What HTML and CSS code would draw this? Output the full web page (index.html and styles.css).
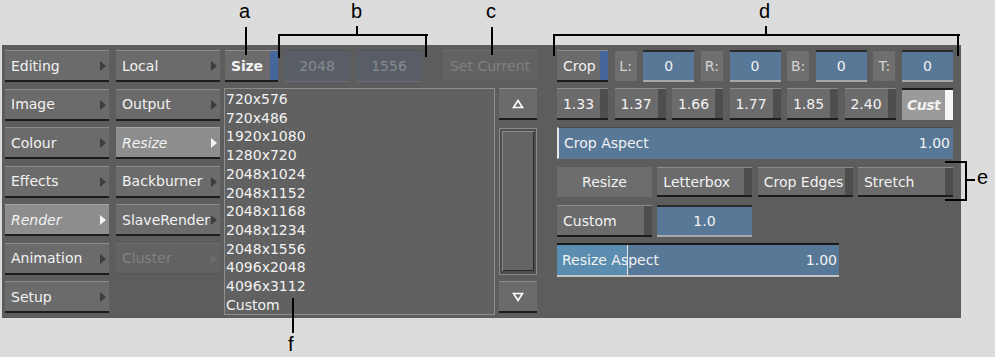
FILE: index.html
```html
<!DOCTYPE html>
<html>
<head>
  <title>Render - Resize</title>
  <link rel="stylesheet" href="styles.css">
</head>
<body>
  <div class="panel">
    <div class="col menu">
      <div class="btn">Editing<span class="arrow"></span></div>
      <div class="btn">Image<span class="arrow"></span></div>
      <div class="btn">Colour<span class="arrow"></span></div>
      <div class="btn">Effects<span class="arrow"></span></div>
      <div class="btn sel">Render<span class="arrow"></span></div>
      <div class="btn">Animation<span class="arrow"></span></div>
      <div class="btn">Setup<span class="arrow"></span></div>
    </div>

    <div class="col menu sub">
      <div class="btn">Local<span class="arrow"></span></div>
      <div class="btn">Output<span class="arrow"></span></div>
      <div class="btn sel">Resize<span class="arrow"></span></div>
      <div class="btn">Backburner<span class="arrow"></span></div>
      <div class="btn">SlaveRender<span class="arrow"></span></div>
      <div class="btn off">Cluster<span class="arrow"></span></div>
    </div>

    <div class="col sizes">
      <div class="sizerow">
        <div class="btn blue size">Size</div>
        <div class="dim">2048</div>
        <div class="dim">1556</div>
        <div class="btn off setcur">Set Current</div>
      </div>
      <div class="listrow">
        <div class="list">
          <div>720x576</div>
          <div>720x486</div>
          <div>1920x1080</div>
          <div>1280x720</div>
          <div>2048x1024</div>
          <div>2048x1152</div>
          <div>2048x1168</div>
          <div>2048x1234</div>
          <div>2048x1556</div>
          <div>4096x2048</div>
          <div>4096x3112</div>
          <div>Custom</div>
        </div>
        <div class="scroll">
          <div class="btn sbtn"><svg width="12" height="10" viewBox="0 0 12 10"><polygon points="1.5,8.5 6,1.5 10.5,8.5" fill="none" stroke="#fff" stroke-width="1.6"/></svg></div>
          <div class="track"></div>
          <div class="btn sbtn"><svg width="12" height="10" viewBox="0 0 12 10"><polygon points="1.5,1.5 10.5,1.5 6,8.5" fill="none" stroke="#fff" stroke-width="1.6"/></svg></div>
        </div>
      </div>
    </div>

    <div class="col right">
      <div class="row r1">
        <div class="btn blue crop">Crop</div>
        <div class="lbl">L:</div>
        <div class="field">0</div>
        <div class="lbl">R:</div>
        <div class="field">0</div>
        <div class="lbl">B:</div>
        <div class="field">0</div>
        <div class="lbl">T:</div>
        <div class="field">0</div>
      </div>
      <div class="row r2">
        <div class="btn strip ratio">1.33</div>
        <div class="btn strip ratio">1.37</div>
        <div class="btn strip ratio">1.66</div>
        <div class="btn strip ratio">1.77</div>
        <div class="btn strip ratio">1.85</div>
        <div class="btn strip ratio">2.40</div>
        <div class="cust">Cust</div>
      </div>
      <div class="slider crop-aspect">
        <span>Crop Aspect</span><span>1.00</span>
      </div>
      <div class="row r4">
        <div class="flat">Resize</div>
        <div class="btn strip wide">Letterbox</div>
        <div class="btn strip wide">Crop Edges</div>
        <div class="btn strip wide">Stretch</div>
      </div>
      <div class="row r5">
        <div class="btn strip wide">Custom</div>
        <div class="field wide">1.0</div>
      </div>
      <div class="slider resize-aspect">
        <div class="fill"></div>
        <span>Resize Aspect</span><span>1.00</span>
      </div>
    </div>
  </div>

  <!-- callouts -->
  <div class="note" style="left:239px;top:0">a</div>
  <div class="vline" style="left:245px;top:27px;height:28px"></div>

  <div class="note" style="left:351px;top:0">b</div>
  <div class="vline" style="left:356px;top:26px;height:9px"></div>
  <div class="hline" style="left:278px;top:34px;width:150px"></div>
  <div class="vline" style="left:278px;top:34px;height:24px"></div>
  <div class="vline" style="left:425px;top:34px;height:23px"></div>

  <div class="note" style="left:486px;top:0">c</div>
  <div class="vline" style="left:491px;top:27px;height:28px"></div>

  <div class="note" style="left:759px;top:0">d</div>
  <div class="vline" style="left:765px;top:26px;height:9px"></div>
  <div class="hline" style="left:553px;top:34px;width:407px"></div>
  <div class="vline" style="left:553px;top:34px;height:22px"></div>
  <div class="vline" style="left:957px;top:34px;height:22px"></div>

  <div class="hline" style="left:945px;top:161px;width:22px"></div>
  <div class="hline" style="left:945px;top:199px;width:22px"></div>
  <div class="vline" style="left:965px;top:161px;height:40px"></div>
  <div class="hline" style="left:965px;top:179px;width:10px"></div>
  <div class="note" style="left:977px;top:166px">e</div>

  <div class="vline" style="left:292px;top:298px;height:35px"></div>
  <div class="note" style="left:288px;top:333px">f</div>
</body>
</html>
```

FILE: styles.css
```css
body {
  margin: 0;
  background: #dcdcdc;
  position: relative;
  width: 995px;
  height: 357px;
  overflow: hidden;
  font-family: "DejaVu Sans", sans-serif;
  font-size: 14px;
  color: #f2f2f2;
}
.panel {
  position: absolute;
  left: 2px;
  top: 45px;
  width: 959px;
  height: 273px;
  background: #5d5d5d;
  display: flex;
  padding: 5px 0 0 3px;
  box-sizing: border-box;
}
.col {
  display: flex;
  flex-direction: column;
}
.menu {
  width: 104px;
  gap: 6.5px;
}
.menu.sub {
  margin-left: 7px;
}
.btn {
  position: relative;
  height: 32px;
  box-sizing: border-box;
  background: #6b6b6b;
  border-top: 1px solid #8c8c8c;
  border-bottom: 2px solid #1c1c1c;
  display: flex;
  align-items: center;
  padding-left: 6px;
  white-space: nowrap;
}
.arrow {
  position: absolute;
  right: 3px;
  top: 10px;
  width: 0;
  height: 0;
  border-top: 5px solid transparent;
  border-bottom: 5px solid transparent;
  border-left: 6px solid #3d3d3d;
}
.btn.sel {
  background: #8d8d8d;
  border-top-color: #a8a8a8;
  font-style: italic;
}
.btn.sel .arrow {
  border-left-color: #f4f4f4;
}
.btn.off {
  background: #626262;
  border-top-color: #6c6c6c;
  border-bottom-color: #5a5a5a;
  color: #808080;
}
.btn.off .arrow {
  border-left-color: #6c6c6c;
}

.sizes {
  margin-left: 5px;
  width: 312px;
}
.sizerow {
  display: flex;
  height: 32px;
}
.btn.blue {
  background: linear-gradient(to left, #44669a 8px, #6b6b6b 8px);
}
.btn.size {
  width: 53px;
  font-weight: 600;
  letter-spacing: -0.2px;
}
.dim {
  width: 66px;
  height: 32px;
  margin-left: 6px;
  box-sizing: border-box;
  background: #595e66;
  border-top: 1px solid #50545a;
  border-bottom: 1px solid #6a6e74;
  color: #858a91;
  display: flex;
  align-items: center;
  justify-content: center;
}
.setcur {
  width: 94px;
  margin-left: 21px;
  justify-content: center;
  padding-left: 0;
  border-bottom: 1px solid #5a5a5a;
}
.listrow {
  display: flex;
  margin-top: 6px;
}
.list {
  width: 271px;
  height: 227px;
  margin-left: -1px;
  box-sizing: border-box;
  background: #616161;
  border: 1px solid #8e8e8e;
  padding: 1px 0 0 1px;
  line-height: 18.7px;
  font-size: 14px;
}
.scroll {
  margin-left: 4px;
  width: 38px;
  display: flex;
  flex-direction: column;
}
.sbtn {
  justify-content: center;
  padding-left: 0;
}
.track {
  height: 147px;
  margin: 8px 0 6px;
  box-sizing: border-box;
  background: #646464;
  border: 1px solid #8a8a8a;
  box-shadow: inset 2px 2px 0 #4e4e4e, inset -2px -3px 0 #4e4e4e, inset 3px 3px 0 #8a8a8a, inset -3px -4px 0 #2a2a2a;
}

.right {
  margin-left: 20px;
  width: 396px;
}
.row {
  display: flex;
  justify-content: space-between;
}
.crop {
  width: 51px;
}
.lbl {
  width: 22px;
  height: 30px;
  margin-top: 1px;
  background: #6f6f6f;
  color: #d4d4d4;
  display: flex;
  align-items: center;
  justify-content: center;
}
.field {
  width: 51px;
  height: 32px;
  box-sizing: border-box;
  background: #587898;
  border-top: 2px solid #2a2a2a;
  border-bottom: 2px solid #a9a9a9;
  display: flex;
  align-items: center;
  justify-content: center;
}
.r2 {
  margin-top: 6px;
}
.btn.strip {
  background: linear-gradient(to left, #4e4e4e 8px, #6b6b6b 8px);
}
.ratio {
  width: 51px;
  padding: 0 8px 0 0;
  justify-content: center;
}
.cust {
  width: 51px;
  height: 32px;
  box-sizing: border-box;
  border-top: 2px solid #1a1a1a;
  background: linear-gradient(to left, #f6f6f6 8px, #9a9a9a 8px);
  font-style: italic;
  font-weight: 600;
  letter-spacing: -0.5px;
  display: flex;
  align-items: center;
  padding-left: 5px;
}
.slider {
  position: relative;
  height: 32px;
  box-sizing: border-box;
  background: #587898;
  display: flex;
  justify-content: space-between;
  align-items: center;
  padding: 0 3px 0 5px;
}
.slider span {
  position: relative;
}
.crop-aspect {
  margin-top: 7px;
  border-left: 2px solid #e8e8e8;
  border-top: 1px solid #4a4a4a;
  border-bottom: 1px solid #6a7a8a;
}
.r4 {
  margin-top: 8px;
}
.flat {
  width: 95px;
  height: 30px;
  background: #6d6d6d;
  display: flex;
  align-items: center;
  justify-content: center;
}
.btn.wide {
  width: 95px;
  height: 30px;
}
.r5 {
  margin-top: 8px;
  justify-content: flex-start;
  gap: 5px;
}
.r5 .btn.wide {
  height: 32px;
}
.field.wide {
  width: 95px;
}
.resize-aspect {
  width: 282px;
  height: 34px;
  margin-top: 6px;
  border-top: 2px solid #1a1a1a;
  border-bottom: 2px solid #c4c4c4;
  padding-right: 2px;
}
.fill {
  position: absolute;
  left: 0;
  top: 0;
  bottom: 0;
  width: 70px;
  background: #5a8db0;
  border-right: 1px solid #e8e8e8;
}

.note {
  position: absolute;
  font-family: "Liberation Sans", Arial, sans-serif;
  font-size: 20px;
  color: #000;
  line-height: 22px;
}
.vline {
  position: absolute;
  width: 2px;
  background: #000;
}
.hline {
  position: absolute;
  height: 2px;
  background: #000;
}
```
